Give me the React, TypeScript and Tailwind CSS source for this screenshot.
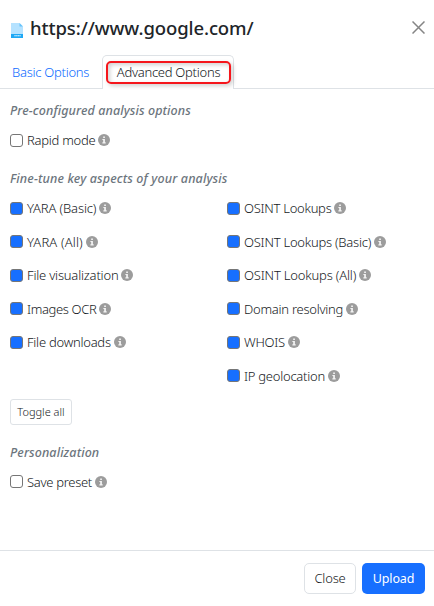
import React from "react";

function Info() {
  return (
    <svg className="ml-[3px] h-3 w-3 shrink-0" viewBox="0 0 12 12" aria-hidden="true">
      <circle cx="6" cy="6" r="6" fill="#9c9c9c" />
      <path d="M5.2 2.4h1.7V4H5.2zM4.4 4.9h2.5v3.4h.8v1.2H4.4V8.3h.8V6.1h-.8z" fill="#f4f4f4" />
    </svg>
  );
}

function Option({ label, checked, track }: { label: string; checked?: boolean; track?: string }) {
  return (
    <label className="flex h-[18px] items-center whitespace-nowrap">
      <span
        className={
          "h-[13px] w-[13px] shrink-0 rounded-[3px] border border-[#767676] " +
          (checked ? "bg-[#176fff]" : "bg-white")
        }
      />
      <span className={"ml-1 text-[13px] font-[350] leading-[18px] " + (track ?? "tracking-[-0.27px]")}>
        {label}
      </span>
      <Info />
    </label>
  );
}

function Heading({ children, track }: { children: React.ReactNode; track?: string }) {
  return (
    <h2
      className={
        "h-[18px] whitespace-nowrap pt-px text-[12.5px] font-medium italic leading-[18px] text-[#6c757d] " +
        (track ?? "tracking-[0.1px]")
      }
    >
      {children}
    </h2>
  );
}

const left = [
  { label: "YARA (Basic)", track: "tracking-[-0.13px]" },
  { label: "YARA (All)", track: "tracking-[0.15px]" },
  { label: "File visualization", track: "tracking-[-0.2px]" },
  { label: "Images OCR", track: "tracking-[-0.35px]" },
  { label: "File downloads", track: "tracking-[-0.25px]" },
];
const right = [
  { label: "OSINT Lookups" },
  { label: "OSINT Lookups (Basic)", track: "tracking-[-0.24px]" },
  { label: "OSINT Lookups (All)", track: "tracking-[-0.18px]" },
  { label: "Domain resolving", track: "tracking-[-0.25px]" },
  { label: "WHOIS" },
  { label: "IP geolocation", track: "tracking-[-0.25px]" },
];

export default function App() {
  return (
    <div className="flex h-[606px] w-[434px] flex-col overflow-hidden bg-white font-['Noto_Sans',sans-serif] text-[#15191d]">
      <header className="flex h-[55px] shrink-0 items-center pl-[11px] pr-[9px]">
        <svg className="mt-[6px] h-[15px] w-3" viewBox="0 0 12 15" aria-hidden="true">
          <path d="M0 0h8.5L12 3.5V12H0z" fill="#b5e2ff" />
          <path d="M8.5 0v3.5H12z" fill="#67c3fb" />
          <path d="M0 11h12v4H0z" fill="#1fa8f5" />
          <path d="M3.3 12.8h6.4" stroke="#e3f5ff" strokeWidth="1.1" strokeDasharray="1.5 .3" />
        </svg>
        <h1 className="ml-[7px] whitespace-nowrap text-[18.5px] font-medium leading-6 tracking-[-0.1px] text-[#212529]">
          https://www.google.com/
        </h1>
        <svg className="ml-auto h-[13px] w-[13px]" viewBox="0 0 13 13" aria-label="Close">
          <path d="M.5.5l12 12M12.5.5l-12 12" stroke="#858585" strokeWidth="1.5" />
        </svg>
      </header>
      <nav className="flex h-[34px] shrink-0 border-b border-[#dee2e6] text-[13px] font-[350] tracking-[-0.27px]">
        <span className="flex w-[102px] items-center whitespace-nowrap pl-3 pt-[3px] text-[#0d6bff]">Basic Options</span>
        <span className="-mb-px flex w-[132px] rounded-t-[5px] border border-b-0 border-[#dee2e6] bg-white pl-[3px] pt-[5px]">
          <span className="flex h-[23px] w-[125px] items-center justify-center whitespace-nowrap rounded-[5px] border-2 border-[#f5161c] pt-px shadow-[2px_2px_4px_rgba(0,0,0,0.18),inset_2px_2px_4px_rgba(0,0,0,0.18)]">
            Advanced Options
          </span>
        </span>
      </nav>
      <main className="flex h-[461px] shrink-0 flex-col px-[10px] pt-[12px]">
        <Heading>Pre-configured analysis options</Heading>
        <div className="mt-[12px]">
          <Option label="Rapid mode" />
        </div>
        <div className="mt-[20px]">
          <Heading track="tracking-[0.14px]">Fine-tune key aspects of your analysis</Heading>
        </div>
        <div className="mt-[12px] grid grid-cols-[217px_auto]">
          <div className="flex flex-col gap-[15.6px]">
            {left.map((item) => (
              <Option key={item.label} {...item} checked />
            ))}
          </div>
          <div className="flex flex-col gap-[15.6px]">
            {right.map((item) => (
              <Option key={item.label} {...item} checked />
            ))}
          </div>
        </div>
        <button className="mt-[14px] h-[26px] w-[62px] shrink-0 whitespace-nowrap rounded-[3px] border border-[#dee2e6] text-[11px] font-[350]">
          Toggle all
        </button>
        <div className="mt-[18px]">
          <Heading>Personalization</Heading>
        </div>
        <div className="mt-[12px]">
          <Option label="Save preset" track="tracking-[-0.3px]" />
        </div>
      </main>
      <footer className="flex flex-1 items-start justify-end gap-[6px] border-t border-[#dee2e6] pr-[9px] pt-3 text-[13px] font-[350] tracking-[-0.2px]">
        <button className="h-[31px] w-[52px] rounded-[5px] border border-[#dee2e6] pt-px">Close</button>
        <button className="h-[31px] w-[63px] rounded-[5px] bg-[#176fff] pt-px text-[12.5px] font-normal tracking-[-0.1px] text-white">
          Upload
        </button>
      </footer>
    </div>
  );
}
